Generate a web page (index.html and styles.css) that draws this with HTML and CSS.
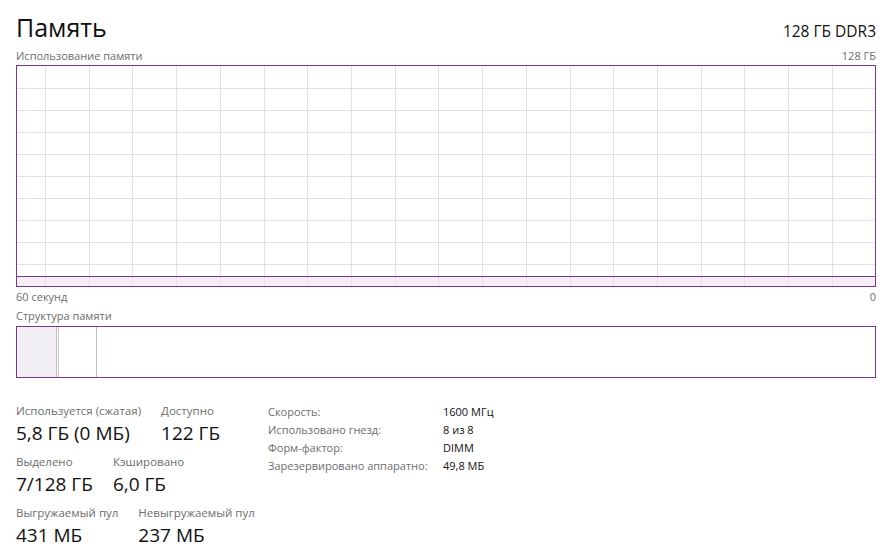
FILE: index.html
```html
<!DOCTYPE html>
<html lang="ru">
<head>
<meta charset="utf-8">
<title>Память</title>
<link rel="stylesheet" href="styles.css">
</head>
<body>
<div class="page">
  <div class="header">
    <div class="title">Память</div>
    <div class="spec">128 ГБ DDR3</div>
  </div>
  <div class="caption-row top-caption">
    <span>Использование памяти</span>
    <span>128 ГБ</span>
  </div>
  <div class="chart">
    <svg class="chart-svg" width="858" height="220" viewBox="0 0 858 220">
      <rect x="0" y="210" width="858" height="10" fill="#f4eef7"/>
      <g stroke="#e4dee7" stroke-width="1">
        <line x1="28.5" y1="0" x2="28.5" y2="220"/>
        <line x1="72.5" y1="0" x2="72.5" y2="220"/>
        <line x1="115.5" y1="0" x2="115.5" y2="220"/>
        <line x1="159.5" y1="0" x2="159.5" y2="220"/>
        <line x1="203.5" y1="0" x2="203.5" y2="220"/>
        <line x1="247.5" y1="0" x2="247.5" y2="220"/>
        <line x1="290.5" y1="0" x2="290.5" y2="220"/>
        <line x1="334.5" y1="0" x2="334.5" y2="220"/>
        <line x1="378.5" y1="0" x2="378.5" y2="220"/>
        <line x1="421.5" y1="0" x2="421.5" y2="220"/>
        <line x1="465.5" y1="0" x2="465.5" y2="220"/>
        <line x1="509.5" y1="0" x2="509.5" y2="220"/>
        <line x1="553.5" y1="0" x2="553.5" y2="220"/>
        <line x1="596.5" y1="0" x2="596.5" y2="220"/>
        <line x1="640.5" y1="0" x2="640.5" y2="220"/>
        <line x1="684.5" y1="0" x2="684.5" y2="220"/>
        <line x1="727.5" y1="0" x2="727.5" y2="220"/>
        <line x1="771.5" y1="0" x2="771.5" y2="220"/>
        <line x1="815.5" y1="0" x2="815.5" y2="220"/>
        <line x1="0" y1="22.5" x2="858" y2="22.5"/>
        <line x1="0" y1="44.5" x2="858" y2="44.5"/>
        <line x1="0" y1="66.5" x2="858" y2="66.5"/>
        <line x1="0" y1="88.5" x2="858" y2="88.5"/>
        <line x1="0" y1="110.5" x2="858" y2="110.5"/>
        <line x1="0" y1="132.5" x2="858" y2="132.5"/>
        <line x1="0" y1="154.5" x2="858" y2="154.5"/>
        <line x1="0" y1="176.5" x2="858" y2="176.5"/>
        <line x1="0" y1="198.5" x2="858" y2="198.5"/>
      </g>
      <line x1="0" y1="210.5" x2="858" y2="210.5" stroke="#76388c" stroke-width="1"/>
    </svg>
  </div>
  <div class="caption-row bottom-caption">
    <span>60 секунд</span>
    <span>0</span>
  </div>
  <div class="caption-row struct-caption">
    <span>Структура памяти</span>
  </div>
  <div class="structure">
    <div class="seg seg-used"></div>
    <div class="seg seg-modified"></div>
    <div class="seg seg-standby"></div>
    <div class="seg seg-free"></div>
  </div>
  <div class="stats">
    <div class="stats-left">
      <div class="stat-row">
        <div class="stat">
          <div class="stat-label">Используется (сжатая)</div>
          <div class="stat-value">5,8 ГБ (0 МБ)</div>
        </div>
        <div class="stat">
          <div class="stat-label">Доступно</div>
          <div class="stat-value">122 ГБ</div>
        </div>
      </div>
      <div class="stat-row">
        <div class="stat">
          <div class="stat-label">Выделено</div>
          <div class="stat-value">7/128 ГБ</div>
        </div>
        <div class="stat">
          <div class="stat-label">Кэшировано</div>
          <div class="stat-value">6,0 ГБ</div>
        </div>
      </div>
      <div class="stat-row">
        <div class="stat">
          <div class="stat-label">Выгружаемый пул</div>
          <div class="stat-value">431 МБ</div>
        </div>
        <div class="stat">
          <div class="stat-label">Невыгружаемый пул</div>
          <div class="stat-value">237 МБ</div>
        </div>
      </div>
    </div>
    <div class="stats-right">
      <div class="prop-label">Скорость:</div><div class="prop-value">1600 МГц</div>
      <div class="prop-label">Использовано гнезд:</div><div class="prop-value">8 из 8</div>
      <div class="prop-label">Форм-фактор:</div><div class="prop-value">DIMM</div>
      <div class="prop-label">Зарезервировано аппаратно:</div><div class="prop-value">49,8 МБ</div>
    </div>
  </div>
</div>
</body>
</html>
```

FILE: styles.css
```css
html, body {
  margin: 0;
  padding: 0;
  background: #ffffff;
}

body {
  font-family: "Open Sans", "Noto Sans", "DejaVu Sans", sans-serif;
  color: #000;
}

.page {
  width: 860px;
  padding-left: 16px;
}

.header {
  display: flex;
  justify-content: space-between;
  align-items: baseline;
  padding-top: 12px;
}

.title {
  font-size: 25px;
  line-height: 30px;
  color: #111;
}

.spec {
  font-size: 15.5px;
  line-height: 30px;
  color: #111;
}

.caption-row {
  display: flex;
  justify-content: space-between;
  font-size: 11px;
  line-height: 16px;
  color: #6d6d6d;
}

.top-caption {
  margin-top: 2px;
}

.chart {
  margin-top: 1px;
  width: 858px;
  height: 220px;
  border: 1px solid #76388c;
}

.chart-svg {
  display: block;
}

.bottom-caption {
  margin-top: 2px;
}

.struct-caption {
  margin-top: 3px;
}

.structure {
  margin-top: 2px;
  width: 858px;
  height: 50px;
  border: 1px solid #76388c;
  display: flex;
}

.seg {
  height: 100%;
}

.seg-used {
  width: 39px;
  background: #f1eff3;
  border-right: 1px solid #c2b8c7;
}

.seg-modified {
  width: 1px;
  margin-left: 1px;
  background: #d7c0e0;
}

.seg-standby {
  width: 37px;
  border-right: 1px solid #c7b8cc;
}

.seg-free {
  flex: 1;
}

.stats {
  display: flex;
  margin-top: 25px;
}

.stats-left {
  width: 252px;
  display: flex;
  flex-direction: column;
  gap: 7px;
}

.stat-row {
  display: flex;
  gap: 20px;
}

.stat-label {
  font-size: 11.5px;
  line-height: 16px;
  color: #6d6d6d;
  white-space: nowrap;
}

.stat-value {
  font-size: 19px;
  line-height: 28px;
  color: #111;
  white-space: nowrap;
}

.stats-right {
  display: grid;
  grid-template-columns: 175px auto;
  align-content: start;
}

.prop-label {
  font-size: 11px;
  line-height: 18px;
  color: #6d6d6d;
  white-space: nowrap;
}

.prop-value {
  font-size: 11px;
  line-height: 18px;
  color: #111;
  white-space: nowrap;
}
```
